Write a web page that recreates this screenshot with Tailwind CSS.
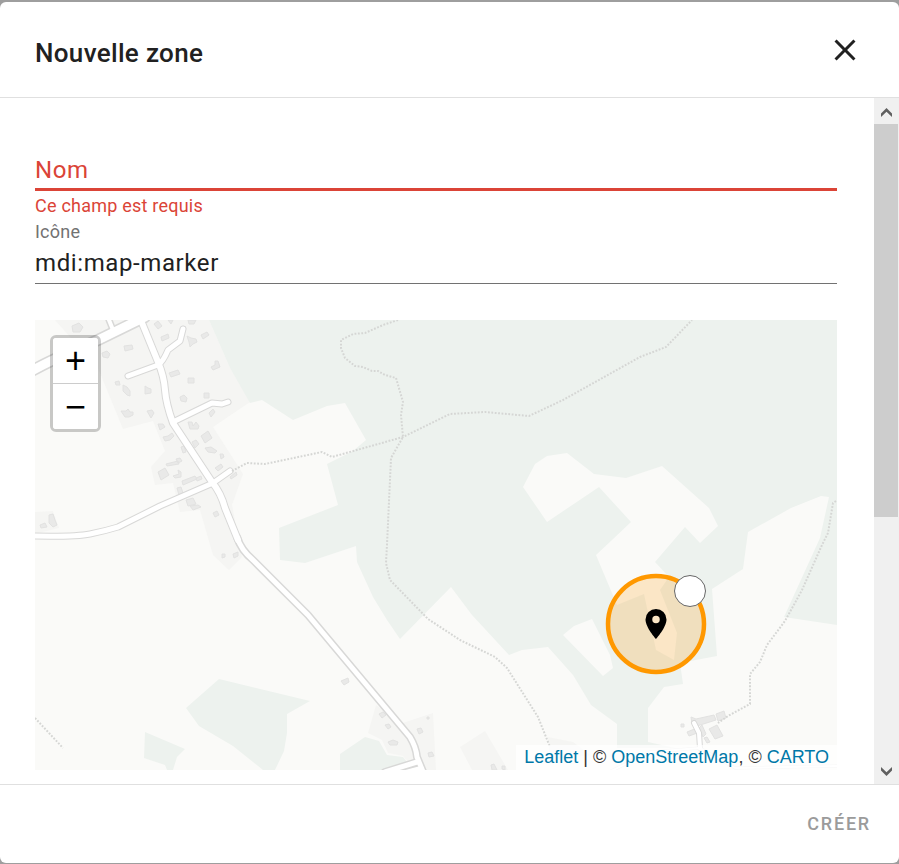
<!DOCTYPE html>
<html lang="fr">
<head>
    <meta charset="UTF-8">
    <meta name="viewport" content="width=device-width, initial-scale=1.0">
    <title>Nouvelle zone</title>
    <script src="https://cdn.jsdelivr.net/npm/@tailwindcss/browser@4"></script>
</head>
<body class="bg-[#9e9e9e] font-[Roboto,sans-serif] text-[#212121]">
    <div role="dialog" aria-labelledby="dialogTitle" class="h-screen pt-[2px] pb-px">
        <div class="flex h-full flex-col overflow-hidden rounded-md bg-white">
            <!-- Header -->
            <header class="flex h-24 shrink-0 items-center justify-between border-b border-[#e0e0e0] pl-[35px] pr-9">
                <h1 id="dialogTitle" class="pt-1.5 text-[26px] leading-8 font-medium tracking-[0.0125em]">Nouvelle zone</h1>
                <button type="button" aria-label="Fermer">
                    <svg class="size-9" viewBox="0 0 24 24" fill="currentColor"><path d="M19,6.41L17.59,5L12,10.59L6.41,5L5,6.41L10.59,12L5,17.59L6.41,19L12,13.41L17.59,19L19,17.59L13.41,12L19,6.41Z"/></svg>
                </button>
            </header>

            <div class="flex min-h-0 flex-1">
                <!-- Form -->
                <main class="min-w-0 flex-1 overflow-hidden pt-[54px] pr-[37px] pl-[35px]">
                    <div class="relative">
                        <label for="zoneName" class="absolute top-0 left-0 text-2xl leading-9 tracking-wide text-[#db4437]">Nom</label>
                        <input type="text" id="zoneName" aria-describedby="nameError" class="block h-[39px] w-full border-b-3 border-[#db4437] text-2xl tracking-wide outline-none">
                    </div>
                    <p id="nameError" class="text-lg leading-[29px] tracking-[0.0125em] text-[#db4437]">Ce champ est requis</p>
                    <label for="zoneIcon" class="block text-lg leading-6 tracking-[0.0125em] text-[#727272]">Icône</label>
                    <input type="text" id="zoneIcon" value="mdi:map-marker" class="block h-10 w-full border-b border-[#727272] pb-0.5 text-2xl tracking-wide outline-none">

                    <!-- Map -->
                    <div class="relative mt-9 h-[450px] overflow-hidden bg-[#fafaf8]">
                        <svg class="absolute inset-0 size-full" viewBox="35 320 802 450" preserveAspectRatio="xMidYMid slice">
                            <!-- built-up areas -->
                            <g fill="#f5f5f3">
                                <path d="M55 320L98 368 123 429 153 421 165 451 151 467 155 485 173 483 180 512 200 510 213 555 229 570 242 557 232 505 243 474 213 427 250 402 230 368 209 320Z"/>
                                <path d="M35 512L53 511 59 528 35 534ZM376 705L368 733 382 740 388 753 403 756 415 770H436L433 713 403 723ZM485 731L460 747 472 770H508ZM548 737L573 742 590 755 550 760Z"/>
                            </g>
                            <!-- woods -->
                            <g fill="#edf2ee">
                                <path fill-rule="evenodd" d="M209 320L230 368 250 403 262 400 293 420 327 406 345 403 366 440 353 451 327 464 338 505 279 528 280 560 305 563 356 546 357 562 373 597 387 620 400 639 451 587 472 615 509 655 522 650 548 647 573 675 591 705 617 724 617 748 675 748 648 742 648 708 664 687 683 684 680 663 717 656 712 589 743 569 748 532 791 508 821 496 829 497 820 538 784 617 837 625V320Z
                                M523 487L535 464 547 456 567 453 594 474 626 478 662 466 709 508 718 526 700 543 685 527 655 562 669 577 660 590 677 633 674 660 656 650 644 594 617 605 596 555 612 540 631 522 599 487 547 522Z
                                M563 635L574 626 592 619 610 655 613 668 603 676Z"/>
                                <path d="M219 679L186 708 199 726 233 746 263 770H275L284 751 287 733 287 714 310 701ZM145 732L185 749 177 757 173 770H167L165 765 144 758ZM340 770V754L365 737 379 741 387 755 403 757 407 762 385 770Z"/>
                            </g>
                            <!-- buildings -->
                            <g fill="#e9e9e8" stroke="#e2e2e1" stroke-width="1">
                                <path d="M72 326l7-3 4 4-3 5-7 0zM154 324l4-3 4 5-4 3zM168 320l5 0-2 4zM188 320h8l-2 4-5 0zM161 337l7-3 1 4-7 3zM187 336l4 2 5 1 1 3-4 2-3 3-1-5zM201 335l6-3 2 3-6 4zM124 346l8-1 1 4-8 2zM102 353l5-2 3 3-2 4-5-1zM211 367l4-2 0-4 3 0 2 6-7 3zM169 373l9-3 2 4-9 3zM188 378h6v5h-6zM115 382l4-1 1 4-4 0zM123 385l4 2 3 4 0 5-3-1-4-4zM145 386l3 2 3 1 0 4-6 1zM204 393h5v5h-5zM180 397l4-2 3 3-1 4-5-1zM209 413l4-4 2 3-4 5zM121 411l5 0 2-2 2 3 3 0 0 3-4 2-4 0zM147 411l5-1 2 3-3 5zM158 424l5 0 2 3-5 3zM163 437l5-1 4-3 2 3-4 4-5 1zM188 422l4 0 1 4 3-4 3 4-1 3-8 0zM201 436l7-5 4 7-7 5zM192 442l4-2 3 4-4 4zM205 448l6-1 6 4-2 2-7-1zM220 454l3 0 1 3-3 2zM215 468l6-4 2 3-5 4zM230 477l6-5 1 3-6 4zM158 472l7-4 4 7-8 5zM166 464l12-3 1 3-12 2zM173 476l6-2-1-4 3 2 0 5-6 1zM176 459l4-1 2 3-4 2zM182 481l13-5 2 3-14 6zM196 478l5-2 1 3-5 2zM177 488l4-1 2 6-4 2zM186 500l7-2 3 6-8 2zM190 506l8-1 3 2-8 3zM213 513l4-2 2 4-4 2zM181 447l3-1 2 6-3 1zM40 525l5-2 2 4-6 1zM49 515l4-1 2 6 2 5-4 2-4-4z"/>
                                <path d="M222 554l3 0 0 3-3 1zM233 554l5-2 0 4-4 2zM341 681l7-3 1 4-5 3zM379 714l4-2 3 3-4 3zM385 725l4-1 2 3-3 2zM388 742l5-2 5 2-1 3-7 0zM417 729l4-1 2 4-4 2zM427 717l2 0 0 2-2 0zM428 753l4-1 2 4-5 1zM491 765l3-1 3 6h-5zM502 766l3 0 0 4-3-1zM681 724h3v3h-3zM691 717l5 2 18-4 2 5-19 6-5-2zM716 714l8-3 2 7-8 3zM687 732l10-4 3 4-11 4zM702 725l4 9-3 3-4-9zM709 729l8-4 6 11-8 3zM704 738l3-1 3 5-3 1z"/>
                            </g>
                            <!-- road casings, then road surfaces -->
                            <g fill="none" stroke="#d8d8d7" stroke-linecap="round" stroke-linejoin="round">
                                <path stroke-width="12" d="M30 372C50 360 80 348 98 340L145 317"/>
                                <path stroke-width="7" d="M107 315L113 330"/>
                                <path stroke-width="8" d="M140 318L158 362Q164 376 165 390T173 423L212 482Q221 493 225 508L238 540"/>
                                <path stroke-width="7" d="M128 376L158 365Q163 362 168 350L180 341 183 329M173 422L212 403 222 404 228 402M230 471L213 483 160 506 118 527Q105 531 90 534T30 536"/>
                                <path stroke-width="8" d="M237 537Q241 550 253 560L308 615 410 737Q416 747 417 757L424 774M417 762L385 772M419 769L400 774"/>
                                <path stroke-width="6" d="M694 723L699 733 700 748"/>
                                <path stroke-width="3" stroke="#e4e4e3" d="M605 774L650 752 700 748 735 768 837 766"/>
                            </g>
                            <g fill="none" stroke="#fff" stroke-linecap="round" stroke-linejoin="round">
                                <path stroke-width="9" d="M30 372C50 360 80 348 98 340L145 317"/>
                                <path stroke-width="4" d="M107 315L113 330"/>
                                <path stroke-width="6" d="M140 318L158 362Q164 376 165 390T173 423L212 482Q221 493 225 508L238 540"/>
                                <path stroke-width="5" d="M128 376L158 365Q163 362 168 350L180 341 183 329M173 422L212 403 222 404 228 402M230 471L213 483 160 506 118 527Q105 531 90 534T30 536"/>
                                <path stroke-width="5" d="M237 537Q241 550 253 560L308 615 410 737Q416 747 417 757L424 774M417 762L385 772M419 769L400 774"/>
                                <path stroke-width="4" d="M694 723L699 733 700 748"/>
                                <path stroke-width="2" d="M605 774L650 752 700 748 735 768 837 766"/>
                            </g>
                            <!-- footpaths -->
                            <g fill="none" stroke="#d5d6d4" stroke-width="2" stroke-dasharray="1.8 1.6">
                                <path d="M398 320L383 325 365 333 353 334 341 340 341 348 345 358 355 366 363 367 372 371 378 371 385 375 396 378 403 402 401 415 403 437 391 458 387 545 386 563 390 580 428 619 460 640 495 657 507 668 538 717 550 747"/>
                                <path d="M232 471L247 463 265 464 322 452 332 457 403 437 450 414 485 412 529 416 563 400 640 357 666 347 692 320"/>
                                <path d="M836 501L833 503 828 533 822 545 802 590 785 621 767 645 760 662 750 674 750 704 728 716 718 723"/>
                                <path d="M35 718L63 748"/>
                            </g>
                            <!-- zone radius with its marker and drag handle -->
                            <circle cx="656" cy="624" r="48" fill="#ff9800" fill-opacity=".2" stroke="#ff9800" stroke-width="4.5"/>
                            <path transform="translate(638 606) scale(1.5)" d="M12,11.5A2.5,2.5 0 0,1 9.5,9A2.5,2.5 0 0,1 12,6.5A2.5,2.5 0 0,1 14.5,9A2.5,2.5 0 0,1 12,11.5M12,2A7,7 0 0,0 5,9C5,14.25 12,22 12,22C12,22 19,14.25 19,9A7,7 0 0,0 12,2Z"/>
                            <circle cx="690" cy="591" r="15.5" fill="#fff" stroke="#666"/>
                        </svg>

                        <div class="absolute top-[15px] left-[15px] flex flex-col rounded-md border-3 border-black/20 bg-clip-padding font-['Liberation_Sans',sans-serif] text-4xl text-black">
                            <button type="button" aria-label="Zoom avant" class="h-[46px] w-[45px] rounded-t-[3px] border-b border-[#ccc] bg-white leading-[45px]">+</button>
                            <button type="button" aria-label="Zoom arrière" class="h-[45px] w-[45px] rounded-b-[3px] bg-white leading-[45px]">−</button>
                        </div>
                        <div class="absolute right-0 bottom-0 bg-white/70 px-2 font-['Liberation_Sans',sans-serif] text-lg leading-[25px] text-[#333]">
                            <a href="#" class="text-[#0078a8]">Leaflet</a> | © <a href="#" class="text-[#0078a8]">OpenStreetMap</a>, © <a href="#" class="text-[#0078a8]">CARTO</a>
                        </div>
                    </div>
                </main>

                <!-- Scrollbar -->
                <div class="flex w-[25px] shrink-0 flex-col bg-[#f0f0f0] pr-px text-[#606060]">
                    <div class="flex h-[26px] items-center justify-center pt-0.5">
                        <svg class="h-[9px] w-[11px]" viewBox="0 0 11 9" fill="currentColor"><path d="M0 5.5L5.5 0 11 5.5V9L5.5 3.8 0 9Z"/></svg>
                    </div>
                    <div class="flex-1"><div class="h-[62%] bg-[#cdcdcd]"></div></div>
                    <div class="flex h-[26px] items-center justify-center">
                        <svg class="h-[9px] w-[11px]" viewBox="0 0 11 9" fill="currentColor"><path d="M0 3.5L5.5 9 11 3.5V0L5.5 5.2 0 0Z"/></svg>
                    </div>
                </div>
            </div>

            <!-- Footer -->
            <footer class="flex h-[79px] shrink-0 items-center justify-end border-t border-[#e0e0e0] pr-7">
                <button type="button" disabled class="text-lg font-medium tracking-widest text-[#9b9b9b]">CRÉER</button>
            </footer>
        </div>
    </div>
</body>
</html>
